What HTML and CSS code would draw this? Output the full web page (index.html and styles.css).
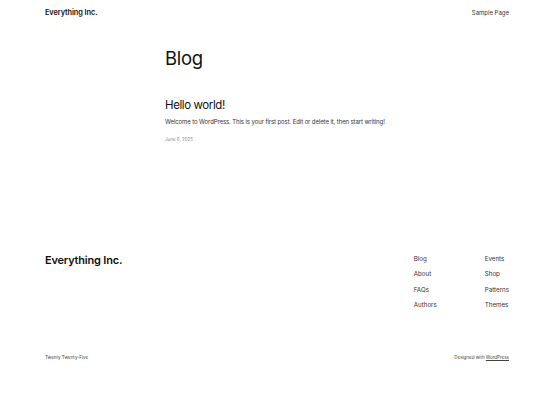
FILE: index.html
```html
<!DOCTYPE html>
<html lang="en">
<head>
<meta charset="utf-8">
<title>Blog – Everything Inc.</title>
<link rel="stylesheet" href="styles.css">
</head>
<body>
<header class="site-header">
  <a class="site-title" href="#">Everything Inc.</a>
  <nav class="header-nav"><a href="#">Sample Page</a></nav>
</header>
<main class="main">
  <h1 class="page-title">Blog</h1>
  <article class="post">
    <h2 class="post-title">Hello world!</h2>
    <p class="post-excerpt">Welcome to WordPress. This is your first post. Edit or delete it, then start writing!</p>
    <div class="post-date">June 6, 2025</div>
  </article>
</main>
<footer class="site-footer">
  <div class="footer-top">
    <a class="footer-title" href="#">Everything Inc.</a>
    <div class="footer-navs">
      <ul class="footer-nav">
        <li><a href="#">Blog</a></li>
        <li><a href="#">About</a></li>
        <li><a href="#">FAQs</a></li>
        <li><a href="#">Authors</a></li>
      </ul>
      <ul class="footer-nav">
        <li><a href="#">Events</a></li>
        <li><a href="#">Shop</a></li>
        <li><a href="#">Patterns</a></li>
        <li><a href="#">Themes</a></li>
      </ul>
    </div>
  </div>
  <div class="footer-bottom">
    <span>Twenty Twenty-Five</span>
    <span>Designed with <a class="wp-link" href="#">WordPress</a></span>
  </div>
</footer>
</body>
</html>
```
FILE: styles.css
```css
* { box-sizing: border-box; }
html, body { margin: 0; padding: 0; background: #ffffff; }
body {
  font-family: "Inter", "Noto Sans", sans-serif;
  color: #111111;
  width: 554px;
}
a { color: inherit; text-decoration: none; }

.site-header {
  display: flex;
  justify-content: space-between;
  align-items: center;
  padding: 4px 45px 0 45px;
  height: 20px;
}
.site-title {
  font-size: 7.4px;
  font-weight: 600;
  letter-spacing: -0.1px;
}
.header-nav { font-size: 6px; color: #333; }

.main {
  width: 224px;
  margin: 0 auto;
  padding-top: 26px;
}
.page-title {
  margin: 0;
  font-size: 18.5px;
  font-weight: 400;
  line-height: 24px;
  letter-spacing: -0.3px;
}
.post { margin-top: 27px; }
.post-title {
  margin: 0;
  font-size: 11.5px;
  font-weight: 400;
  line-height: 16px;
  letter-spacing: -0.4px;
}
.post-excerpt {
  margin: 4px 0 0 0;
  font-size: 6px;
  line-height: 10px;
  letter-spacing: -0.1px;
  white-space: nowrap;
  color: #333;
}
.post-date {
  margin-top: 9px;
  font-size: 4.5px;
  line-height: 8px;
  color: #888;
}

.site-footer {
  padding: 0 45px;
  margin-top: 110px;
}
.footer-top {
  display: flex;
  justify-content: space-between;
  align-items: flex-start;
}
.footer-title {
  font-size: 11px;
  font-weight: 600;
  line-height: 12px;
  letter-spacing: -0.2px;
}
.footer-navs {
  display: flex;
}
.footer-nav {
  list-style: none;
  margin: 0;
  padding: 0;
  display: flex;
  flex-direction: column;
  gap: 5.3px;
  font-size: 6.2px;
  line-height: 10px;
  color: #333;
}
.footer-nav:first-child { width: 71px; }

.footer-bottom {
  display: flex;
  justify-content: space-between;
  margin-top: 44px;
  font-size: 4.5px;
  line-height: 8px;
  color: #444;
}
.wp-link { text-decoration: underline; }
```
